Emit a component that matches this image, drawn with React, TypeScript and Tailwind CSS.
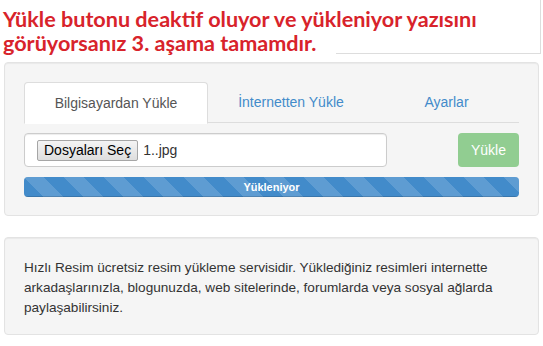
export default function App() {
  return (
    <div className="relative w-[543px] h-[346px] overflow-hidden bg-white" style={{ fontFamily: '"Liberation Sans", Arial, sans-serif' }}>
      <div className="absolute left-[336px] top-[-1px] w-[205px] h-[55px] border-b border-r border-[#dddddd]" />
      <div className="relative h-[62px] pl-[3px] pt-[7px]">
        <div className="text-[21.6px] font-bold leading-[24px] text-[#d8232b]" style={{ fontFamily: 'Lato, "Open Sans", sans-serif' }}>
          <div>Yükle butonu deaktif oluyor ve yükleniyor yazısını</div>
          <div>görüyorsanız 3. aşama tamamdır.</div>
        </div>
      </div>

      <div className="mx-[4px] h-[154px] rounded-[4px] border border-[#e3e3e3] bg-[#f5f5f5] px-[19px] pt-[19px] shadow-[inset_0_1px_1px_rgba(0,0,0,0.05)]">
        <div className="flex h-[41px] border-b border-[#dddddd] text-[14px]">
          <div className="-mb-px flex h-[42px] w-[184px] items-center justify-center rounded-t-[4px] border border-[#dddddd] border-b-transparent bg-white text-[#555555]">
            Bilgisayardan Yükle
          </div>
          <div className="flex w-[166px] items-center justify-center text-[#428bca]">İnternetten Yükle</div>
          <div className="flex flex-1 items-center justify-center text-[#428bca]">Ayarlar</div>
        </div>

        <div className="mt-[10px] flex items-center justify-between">
          <div className="flex h-[34px] w-[363px] items-center rounded-[4px] border border-[#cccccc] bg-white pl-[12px] text-[14px] text-[#333333] shadow-[inset_0_1px_1px_rgba(0,0,0,0.075)]">
            <div className="flex h-[21px] items-center rounded-[2px] border border-[#a6a6a6] bg-[linear-gradient(#f4f4f4,#dedede)] px-[6px] text-[14px] text-black">
              Dosyaları Seç
            </div>
            <span className="ml-[5px]">1..jpg</span>
          </div>
          <div className="flex h-[34px] w-[61px] items-center justify-center rounded-[4px] bg-[#91cd91] text-[14px] text-white">
            Yükle
          </div>
        </div>

        <div className="mt-[10px] h-[20px] overflow-hidden rounded-[4px] bg-[#f5f5f5] shadow-[inset_0_1px_2px_rgba(0,0,0,0.1)]">
          <div className="flex h-full w-full items-center justify-center bg-[#428bca] bg-[linear-gradient(45deg,rgba(255,255,255,0.15)_25%,transparent_25%,transparent_50%,rgba(255,255,255,0.15)_50%,rgba(255,255,255,0.15)_75%,transparent_75%,transparent)] bg-[length:40px_40px] text-[11px] font-bold text-white shadow-[inset_0_-1px_0_rgba(0,0,0,0.15)]">
            Yükleniyor
          </div>
        </div>
      </div>

      <div className="mx-[4px] mt-[21px] h-[98px] rounded-[4px] border border-[#e3e3e3] bg-[#f5f5f5] px-[19px] pt-[20px] text-[13.6px] leading-[20px] text-[#333333] shadow-[inset_0_1px_1px_rgba(0,0,0,0.05)]">
        Hızlı Resim ücretsiz resim yükleme servisidir. Yüklediğiniz resimleri internette arkadaşlarınızla, blogunuzda, web sitelerinde, forumlarda veya sosyal ağlarda paylaşabilirsiniz.
      </div>
    </div>
  );
}
